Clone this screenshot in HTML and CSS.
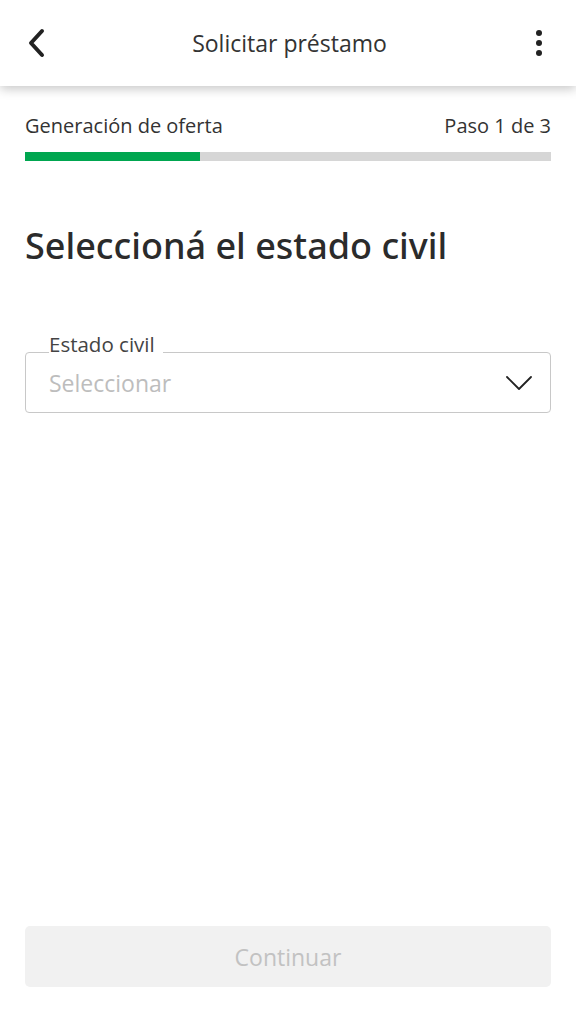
FILE: index.html
```html
<!DOCTYPE html>
<html>
  <head>
    <meta charset="utf-8" />
    <title>Solicitar préstamo</title>
    <link rel="stylesheet" href="styles.css">
  </head>

  <body>
    <div class="app">
      <div class="topbar">
        <svg class="back" width="24" height="30" viewBox="0 0 24 30">
          <path d="M17 3 L6 15 L17 27" fill="none" stroke="#222" stroke-width="4" stroke-linecap="round" stroke-linejoin="round" />
        </svg>
        <div class="title">Solicitar préstamo</div>
        <svg class="more" width="10" height="28" viewBox="0 0 10 28">
          <circle cx="5" cy="4" r="3" fill="#222" />
          <circle cx="5" cy="14" r="3" fill="#222" />
          <circle cx="5" cy="24" r="3" fill="#222" />
        </svg>
      </div>

      <div class="content">
        <div class="step_row">
          <span>Generación de oferta</span>
          <span>Paso 1 de 3</span>
        </div>
        <div class="progress"><div class="progress_fill"></div></div>

        <h1 class="heading">Seleccioná el estado civil</h1>

        <fieldset class="field">
          <legend>Estado civil</legend>
          <div class="field_row">
            <span class="placeholder">Seleccionar</span>
            <svg width="28" height="16" viewBox="0 0 28 16">
              <path d="M2 2 L14 14 L26 2" fill="none" stroke="#222" stroke-width="1.8" stroke-linecap="round" stroke-linejoin="round" />
            </svg>
          </div>
        </fieldset>
      </div>

      <div class="footer">
        <button class="btn_continue" disabled>Continuar</button>
      </div>
    </div>
  </body>
</html>
```

FILE: styles.css
```css
html,
body {
  margin: 0;
  padding: 0;
  background: #fff;
  font-family: "Open Sans", "Noto Sans", sans-serif;
  color: #333;
}
.app {
  display: flex;
  flex-direction: column;
  height: 1024px;
}
.topbar {
  height: 86px;
  display: flex;
  align-items: center;
  justify-content: space-between;
  padding: 0 32px 0 25px;
  background: #fff;
  box-shadow: 0 3px 10px rgba(0, 0, 0, 0.22);
  position: relative;
  z-index: 1;
}
.topbar .title {
  font-size: 23px;
  color: #333;
  margin-right: 4px;
}
.content {
  flex: 1;
  padding: 0 25px;
}
.step_row {
  display: flex;
  justify-content: space-between;
  font-size: 20px;
  color: #333;
  margin-top: 25px;
  line-height: 30px;
}
.progress {
  height: 9px;
  background: #d6d6d6;
  margin-top: 11px;
}
.progress_fill {
  width: 33.3%;
  height: 100%;
  background: #00a650;
}
.heading {
  margin: 62px 0 0;
  font-family: "Noto Sans", sans-serif;
  font-weight: 500;
  font-size: 36px;
  line-height: 46px;
  color: #2b2b2b;
}
.field {
  margin: 73px 0 0;
  padding: 0 17px 0 23px;
  border: 1px solid #c8c8c8;
  border-radius: 4px;
  height: 71px;
  box-sizing: border-box;
}
.field legend {
  position: relative;
  top: -8px;
  font-size: 20.5px;
  color: #444;
  padding: 0 8px 0 0;
  line-height: 20px;
}
.field_row {
  display: flex;
  align-items: center;
  justify-content: space-between;
  height: 46px;
  margin-top: -2px;
}
.placeholder {
  font-size: 23px;
  color: #bdbdbd;
}
.footer {
  padding: 0 25px 37px;
}
.btn_continue {
  width: 100%;
  height: 61px;
  border: none;
  border-radius: 5px;
  background: #f1f1f1;
  color: #c2c2c2;
  font-family: "Open Sans", "Noto Sans", sans-serif;
  font-size: 23px;
}
```
